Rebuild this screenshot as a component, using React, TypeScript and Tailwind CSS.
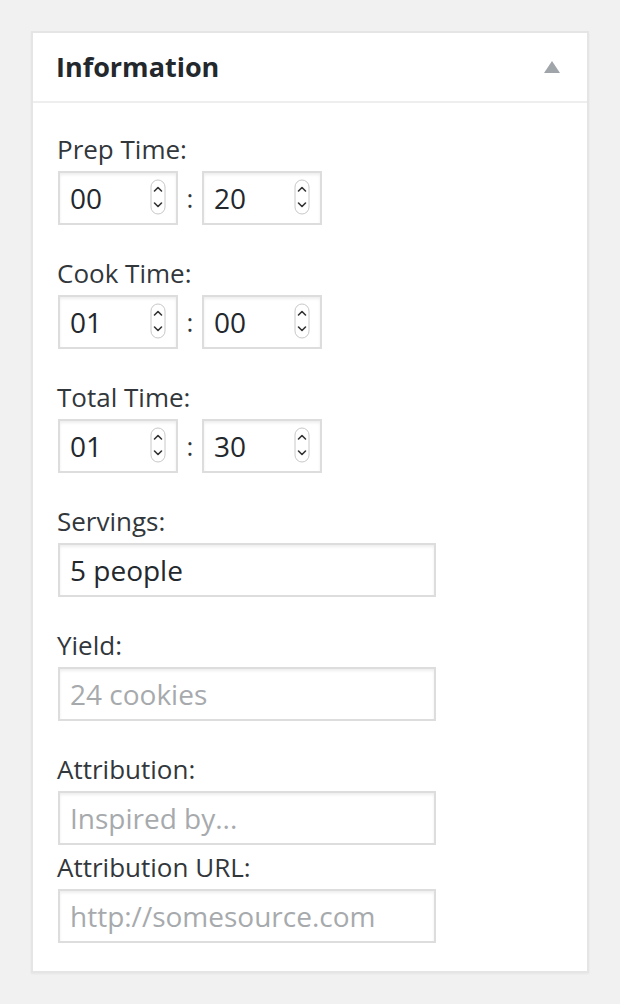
import React from 'react';

const font = { fontFamily: '"Open Sans", "Noto Sans", sans-serif' };

function Spinner() {
  return (
    <svg className="absolute right-[12px] top-[8px]" width="16" height="36" viewBox="0 0 16 36" fill="none">
      <rect x="1" y="1" width="14" height="34" rx="7" fill="#fff" stroke="#c8c8c8" strokeWidth="1" />
      <path d="M4.5 12 L8 8.5 L11.5 12" stroke="#333" strokeWidth="1.6" strokeLinecap="round" strokeLinejoin="round" />
      <path d="M4.5 24 L8 27.5 L11.5 24" stroke="#333" strokeWidth="1.6" strokeLinecap="round" strokeLinejoin="round" />
    </svg>
  );
}

function TimeBox({ value }: { value: string }) {
  return (
    <div className="relative w-[120px] h-[54px]">
      <input
        readOnly
        value={value}
        className="w-full h-full border-2 border-[#dddddd] bg-white px-[10px] text-[28px] text-[#23282d] shadow-[inset_0_2px_3px_rgba(0,0,0,0.07)] outline-none"
        style={font}
      />
      <Spinner />
    </div>
  );
}

function TimeField({ label, h, m }: { label: string; h: string; m: string }) {
  return (
    <div className="flex flex-col gap-[4px]">
      <label className="h-[36px] leading-[36px] text-[26px] text-[#32373c] -ml-px">{label}</label>
      <div className="flex items-center">
        <TimeBox value={h} />
        <span className="w-[24px] text-center text-[26px] text-[#32373c]">:</span>
        <TimeBox value={m} />
      </div>
    </div>
  );
}

function TextField({ label, value, placeholder }: { label: string; value?: string; placeholder?: string }) {
  return (
    <div className="flex flex-col gap-[4px]">
      <label className="h-[36px] leading-[36px] text-[26px] text-[#32373c] -ml-px">{label}</label>
      <input
        readOnly
        value={value ?? ''}
        placeholder={placeholder}
        className="w-[378px] h-[54px] border-2 border-[#dddddd] bg-white px-[10px] text-[28px] text-[#23282d] placeholder:text-[#a7aaad] shadow-[inset_0_2px_3px_rgba(0,0,0,0.07)] outline-none"
        style={font}
      />
    </div>
  );
}

export default function App() {
  return (
    <div className="min-h-[1004px] bg-[#f1f1f1] pt-[31px] pl-[31px]" style={font}>
      <div className="w-[558px] h-[942px] bg-white border-2 border-[#e5e5e5] shadow-[0_1px_2px_rgba(0,0,0,0.05)] flex flex-col">
        <div className="h-[70px] flex items-center justify-between pl-[23px] pr-[27px] border-b-2 border-[#eeeeee]">
          <h2 className="text-[27px] font-bold text-[#23282d]">Information</h2>
          <svg width="16" height="12" viewBox="0 0 16 12">
            <path d="M8 0 L16 12 L0 12 Z" fill="#a0a5aa" />
          </svg>
        </div>
        <div className="pl-[25px] pt-[28px] flex flex-col gap-[30px]">
          <TimeField label="Prep Time:" h="00" m="20" />
          <TimeField label="Cook Time:" h="01" m="00" />
          <TimeField label="Total Time:" h="01" m="30" />
          <TextField label="Servings:" value="5 people" />
          <TextField label="Yield:" placeholder="24 cookies" />
          <div className="flex flex-col gap-[4px]">
            <TextField label="Attribution:" placeholder="Inspired by..." />
            <TextField label="Attribution URL:" placeholder="http://somesource.com" />
          </div>
        </div>
      </div>
    </div>
  );
}
